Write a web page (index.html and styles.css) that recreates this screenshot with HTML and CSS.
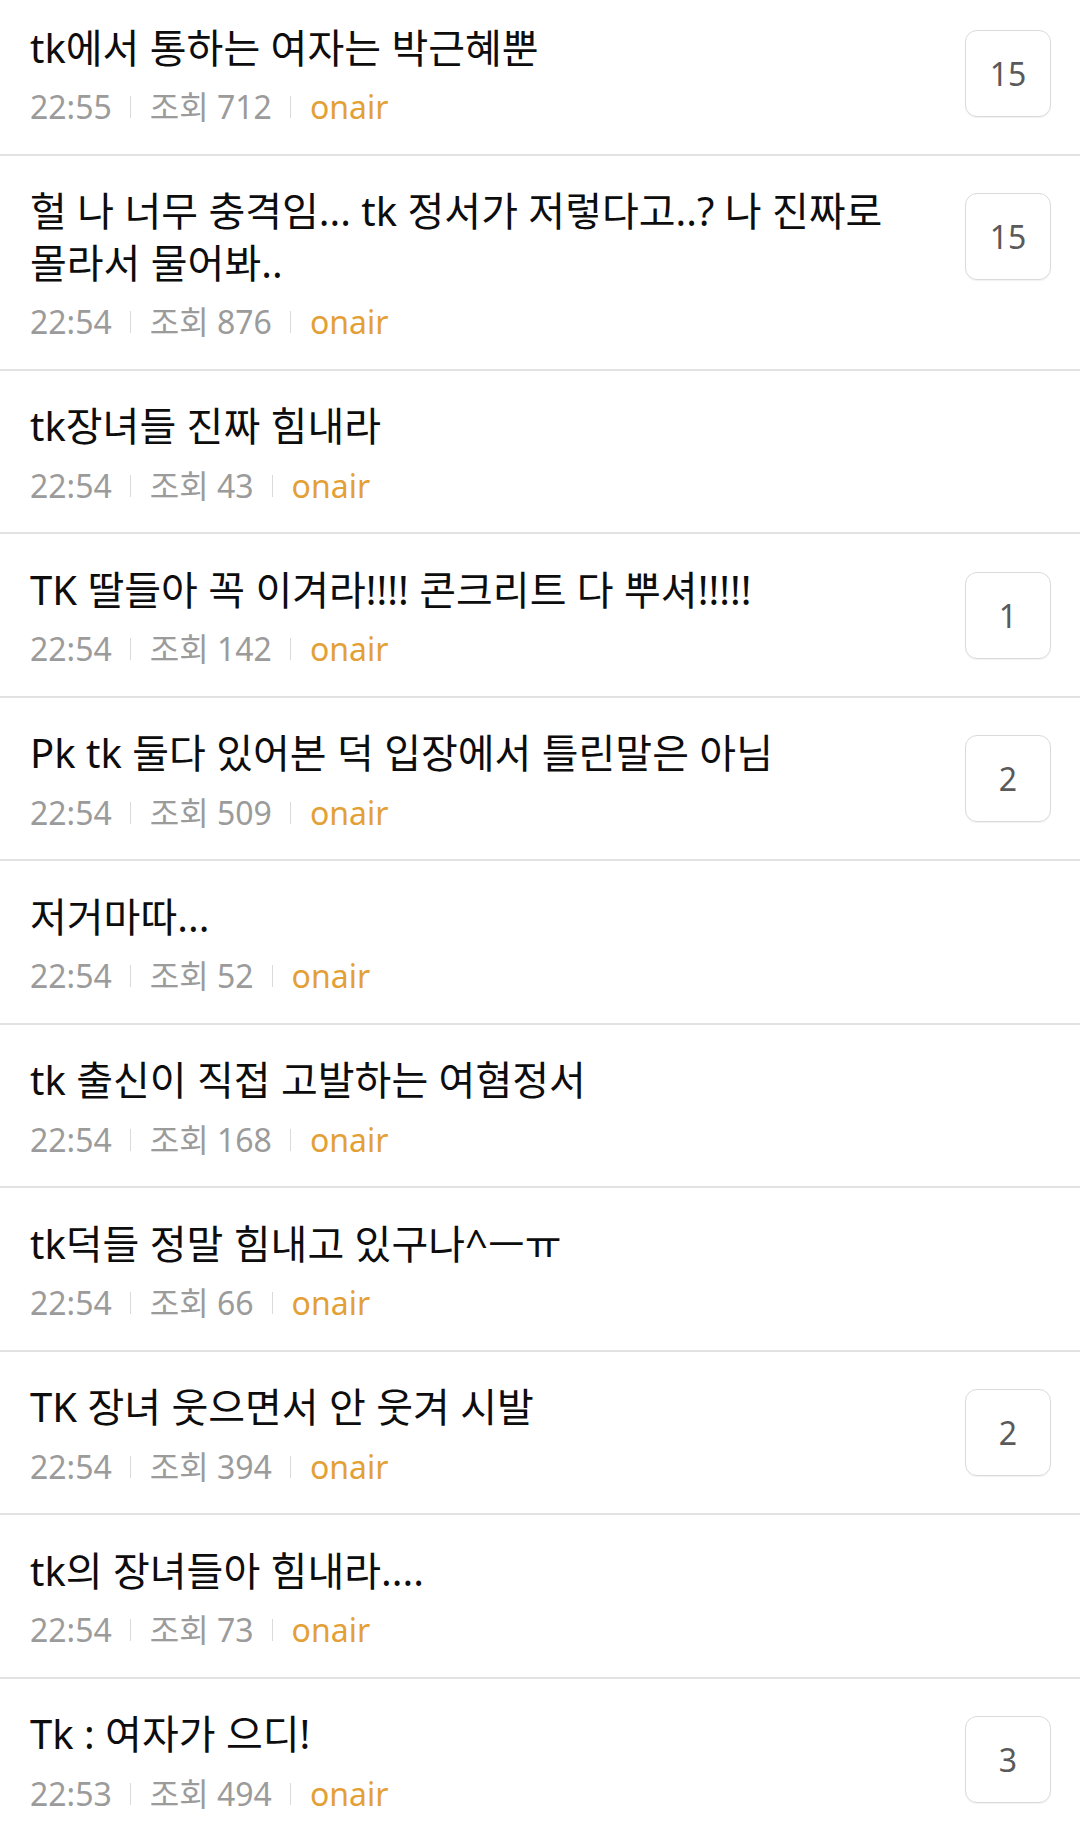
FILE: index.html
```html
<!DOCTYPE html>
<html lang="ko">
<head>
    <meta charset="UTF-8">
    <meta name="viewport" content="width=device-width, initial-scale=1.0">
    <title>onair</title>
    <link rel="stylesheet" href="styles.css">
</head>
<body>

<ul class="list">
    <li class="item">
        <div class="body">
            <div class="title">tk에서 통하는 여자는 박근혜뿐</div>
            <div class="meta"><span>22:55</span><span>조회 712</span><span class="board">onair</span></div>
        </div>
        <div class="count">15</div>
    </li>
    <li class="item">
        <div class="body">
            <div class="title">헐 나 너무 충격임... tk 정서가 저렇다고..? 나 진짜로 몰라서 물어봐..</div>
            <div class="meta"><span>22:54</span><span>조회 876</span><span class="board">onair</span></div>
        </div>
        <div class="count">15</div>
    </li>
    <li class="item">
        <div class="body">
            <div class="title">tk장녀들 진짜 힘내라</div>
            <div class="meta"><span>22:54</span><span>조회 43</span><span class="board">onair</span></div>
        </div>
    </li>
    <li class="item">
        <div class="body">
            <div class="title">TK 딸들아 꼭 이겨라!!!! 콘크리트 다 뿌셔!!!!!</div>
            <div class="meta"><span>22:54</span><span>조회 142</span><span class="board">onair</span></div>
        </div>
        <div class="count">1</div>
    </li>
    <li class="item">
        <div class="body">
            <div class="title">Pk tk 둘다 있어본 덕 입장에서 틀린말은 아님</div>
            <div class="meta"><span>22:54</span><span>조회 509</span><span class="board">onair</span></div>
        </div>
        <div class="count">2</div>
    </li>
    <li class="item">
        <div class="body">
            <div class="title">저거마따...</div>
            <div class="meta"><span>22:54</span><span>조회 52</span><span class="board">onair</span></div>
        </div>
    </li>
    <li class="item">
        <div class="body">
            <div class="title">tk 출신이 직접 고발하는 여혐정서</div>
            <div class="meta"><span>22:54</span><span>조회 168</span><span class="board">onair</span></div>
        </div>
    </li>
    <li class="item">
        <div class="body">
            <div class="title">tk덕들 정말 힘내고 있구나^ㅡㅠ</div>
            <div class="meta"><span>22:54</span><span>조회 66</span><span class="board">onair</span></div>
        </div>
    </li>
    <li class="item">
        <div class="body">
            <div class="title">TK 장녀 웃으면서 안 웃겨 시발</div>
            <div class="meta"><span>22:54</span><span>조회 394</span><span class="board">onair</span></div>
        </div>
        <div class="count">2</div>
    </li>
    <li class="item">
        <div class="body">
            <div class="title">tk의 장녀들아 힘내라....</div>
            <div class="meta"><span>22:54</span><span>조회 73</span><span class="board">onair</span></div>
        </div>
    </li>
    <li class="item">
        <div class="body">
            <div class="title">Tk : 여자가 으디!</div>
            <div class="meta"><span>22:53</span><span>조회 494</span><span class="board">onair</span></div>
        </div>
        <div class="count">3</div>
    </li>
</ul>

</body>
</html>
```

FILE: styles.css
```css
body {
    margin: 0;
    background: #fff;
    font-family: "Noto Sans", "Noto Sans CJK KR", sans-serif;
    overflow: hidden;
}

.list {
    list-style: none;
    margin: -8px 0 0 0;
    padding: 0;
}

.item {
    display: flex;
    align-items: flex-start;
    gap: 40px;
    padding: 29.5px 29px 24.5px 30px;
    border-bottom: 2px solid #e2e2e2;
}

.body {
    flex: 1;
    min-width: 0;
}

.title {
    font-size: 40px;
    line-height: 51.5px;
    color: #0d0d0d;
    word-break: keep-all;
}

.meta {
    display: flex;
    align-items: center;
    font-size: 32px;
    line-height: 44px;
    color: #9b9b9b;
    margin-top: 12px;
}

.meta span + span {
    border-left: 1px solid #dadada;
    margin-left: 18px;
    padding-left: 19px;
    line-height: 22px;
}

.meta .board {
    color: #e3a036;
}

.count {
    flex: none;
    width: 84px;
    height: 85px;
    margin-top: 8px;
    border: 1px solid #dadada;
    border-radius: 12px;
    box-shadow: 0 1px 1px rgba(0, 0, 0, 0.06);
    display: flex;
    align-items: center;
    justify-content: center;
    font-size: 32px;
    color: #5a5a5a;
}
```
